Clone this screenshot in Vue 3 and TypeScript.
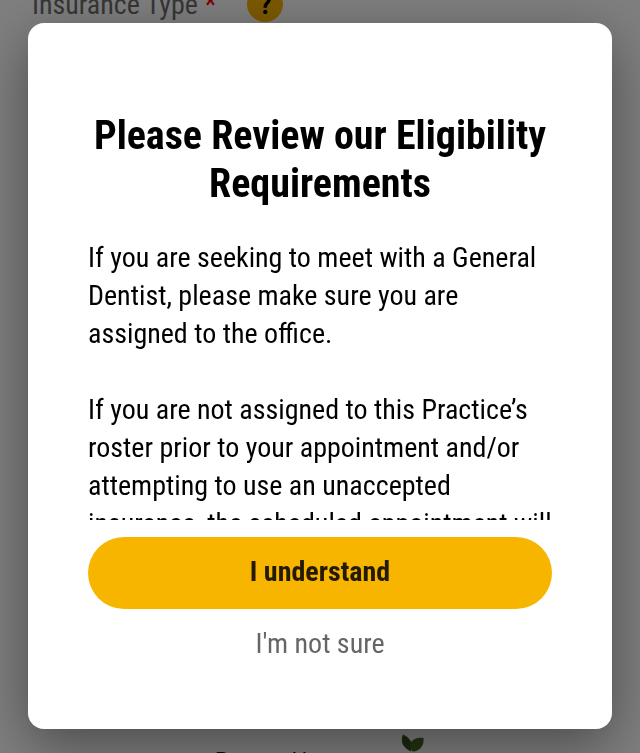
<script setup lang="ts">
const paragraphs: string[] = [
  'If you are seeking to meet with a General Dentist, please make sure you are assigned to the office.',
  'If you are not assigned to this Practice’s roster prior to your appointment and/or attempting to use an unaccepted insurance, the scheduled appointment will be cancelled.',
]
</script>

<template>
  <div class="page">
    <div class="form-row">
      <span class="label">Insurance Type <span class="req">*</span></span>
      <span class="help">?</span>
    </div>
    <div class="footer-row">
      <span class="powered">Powered by</span>
      <svg class="leaf" width="23" height="18" viewBox="0 0 23 18">
        <path d="M2 0.500C-0.500 6 0.500 13 10 17.500C12 12 11.500 5 2 0.500Z" fill="#37511a" />
        <path d="M22.500 4C15 3 9.500 6 9.500 11C9.500 14 10.500 16.500 11.500 17.500C18 18 23.500 12 22.500 4Z" fill="#456a22" />
      </svg>
    </div>
  </div>
  <div class="overlay">
    <section class="modal">
      <h1 class="title">Please Review our Eligibility Requirements</h1>
      <div class="body">
        <p v-for="p in paragraphs" :key="p">{{ p }}</p>
      </div>
      <button class="primary"><span class="primary-label">I understand</span></button>
      <button class="secondary">I'm not sure</button>
    </section>
  </div>
</template>

<style>
html, body { margin: 0; height: 100%; overflow: hidden; background: #fff; }
</style>

<style scoped>
.page {
  height: 753px;
  box-sizing: border-box;
  display: flex;
  flex-direction: column;
  justify-content: space-between;
  padding: 0 32px;
  overflow: hidden;
  font-family: Roboto, sans-serif;
  font-stretch: condensed;
  color: #6e6e6e;
}
.form-row { display: flex; align-items: center; gap: 31px; margin-top: -14px; height: 36px; }
.label { font-size: 28px; }
.req { color: #f00; }
.help {
  width: 36px; height: 36px; border-radius: 50%;
  background: #f9b500; color: #000;
  display: flex; align-items: center; justify-content: center;
  font-weight: 700; font-size: 28px;
}
.footer-row { display: flex; align-items: flex-start; height: 19px; padding-left: 183px; }
.powered {
  width: 186px;
  font-size: 21px;
  line-height: 24px;
  font-stretch: normal;
  color: #000;
  margin-top: 14px;
  flex: none;
}
.overlay {
  position: fixed; inset: 0;
  background: rgba(0, 0, 0, 0.5);
}
.modal {
  position: absolute;
  left: 28px; top: 23px;
  width: 584px; height: 706px;
  box-sizing: border-box;
  padding: 89px 60px 0;
  background: #fff;
  border-radius: 16px;
  box-shadow: 0 16px 56px rgba(0, 0, 0, 0.42);
  font-family: Roboto, sans-serif;
  font-stretch: condensed;
  display: flex;
  flex-direction: column;
}
.title {
  margin: 0;
  font-size: 40px;
  line-height: 48px;
  font-weight: 700;
  text-align: center;
  color: #000;
}
.body {
  margin-top: 31px;
  height: 281px;
  flex: none;
  overflow: hidden;
  font-size: 28px;
  line-height: 38px;
  color: #000;
}
.body p { margin: 0 0 38px; }
.primary {
  margin-top: 17px;
  height: 72px;
  flex: none;
  border: 0;
  border-radius: 36px;
  background: #f7b500;
  color: #231a00;
  font: inherit;
  font-stretch: condensed;
  font-weight: 700;
  font-size: 28px;
}
.primary-label { display: block; margin-top: -4px; }
.secondary {
  margin-top: 16px;
  height: 36px;
  flex: none;
  border: 0;
  background: none;
  color: #666;
  font: inherit;
  font-stretch: condensed;
  font-size: 28px;
}
</style>
